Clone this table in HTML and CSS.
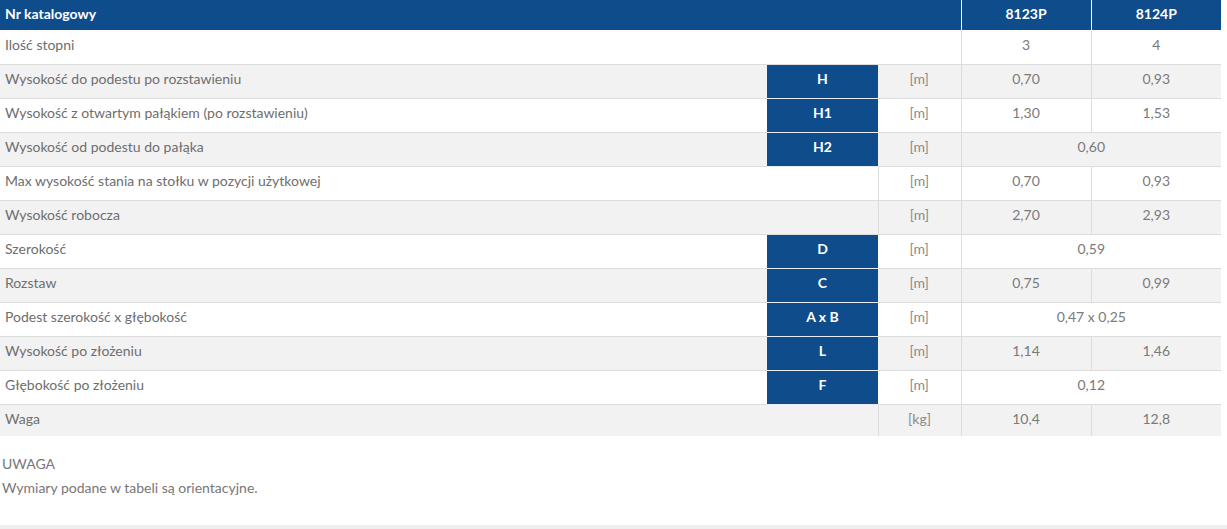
FILE: index.html
```html
<!DOCTYPE html>
<html lang="pl">
<head>
<meta charset="utf-8">
<title>Tabela</title>
<link rel="stylesheet" href="styles.css">
</head>
<body>
<div class="page">
<table class="spec">
  <colgroup>
    <col class="c-label"><col class="c-code"><col class="c-unit"><col class="c-val"><col class="c-val">
  </colgroup>
  <thead>
    <tr><th colspan="3" class="h-label">Nr katalogowy</th><th class="h-val">8123P</th><th class="h-val">8124P</th></tr>
  </thead>
  <tbody>
    <tr><td colspan="3" class="lbl">Ilość stopni</td><td class="val">3</td><td class="val">4</td></tr>
    <tr><td class="lbl">Wysokość do podestu po rozstawieniu</td><td class="code">H</td><td class="unit">[m]</td><td class="val">0,70</td><td class="val">0,93</td></tr>
    <tr><td class="lbl">Wysokość z otwartym pałąkiem (po rozstawieniu)</td><td class="code">H1</td><td class="unit">[m]</td><td class="val">1,30</td><td class="val">1,53</td></tr>
    <tr><td class="lbl">Wysokość od podestu do pałąka</td><td class="code">H2</td><td class="unit">[m]</td><td colspan="2" class="val">0,60</td></tr>
    <tr><td colspan="2" class="lbl">Max wysokość stania na stołku w pozycji użytkowej</td><td class="unit bl">[m]</td><td class="val">0,70</td><td class="val">0,93</td></tr>
    <tr><td colspan="2" class="lbl">Wysokość robocza</td><td class="unit bl">[m]</td><td class="val">2,70</td><td class="val">2,93</td></tr>
    <tr><td class="lbl">Szerokość</td><td class="code">D</td><td class="unit">[m]</td><td colspan="2" class="val">0,59</td></tr>
    <tr><td class="lbl">Rozstaw</td><td class="code">C</td><td class="unit">[m]</td><td class="val">0,75</td><td class="val">0,99</td></tr>
    <tr><td class="lbl">Podest szerokość x głębokość</td><td class="code">A x B</td><td class="unit">[m]</td><td colspan="2" class="val">0,47 x 0,25</td></tr>
    <tr><td class="lbl">Wysokość po złożeniu</td><td class="code">L</td><td class="unit">[m]</td><td class="val">1,14</td><td class="val">1,46</td></tr>
    <tr><td class="lbl">Głębokość po złożeniu</td><td class="code">F</td><td class="unit">[m]</td><td colspan="2" class="val">0,12</td></tr>
    <tr class="last"><td colspan="2" class="lbl">Waga</td><td class="unit bl">[kg]</td><td class="val">10,4</td><td class="val">12,8</td></tr>
  </tbody>
</table>
<div class="note">
  <p class="note-title">UWAGA</p>
  <p class="note-text">Wymiary podane w tabeli są orientacyjne.</p>
</div>
<div class="footer-line"></div>
</div>
</body>
</html>
```
FILE: styles.css
```css
html, body {
  margin: 0;
  padding: 0;
  background: #fff;
}
body {
  font-family: Lato, "Open Sans", "Liberation Sans", sans-serif;
  font-size: 14px;
  color: #707070;
}
.page {
  width: 1227px;
}
.spec {
  width: 1221px;
  border-collapse: collapse;
  table-layout: fixed;
}
.c-label { width: 767px; }
.c-code { width: 111px; }
.c-unit { width: 83px; }
.c-val { width: 130px; }

.spec th {
  background: #0e4c8b;
  color: #fff;
  font-weight: 700;
  height: 30px;
  padding: 0 5px 3px;
  line-height: 18px;
  box-sizing: border-box;
}
.h-label { text-align: left; }
.h-val {
  text-align: center;
  border-left: 1px solid #fff;
}
.spec td {
  height: 34px;
  padding: 0 5px 4px;
  line-height: 18px;
  box-sizing: border-box;
  border-bottom: 1px solid #dcdcdc;
  vertical-align: middle;
}
.spec tbody tr:nth-child(even) td { background: #f2f2f2; }
.spec tbody tr.last td { border-bottom: none; height: 32px; padding-bottom: 2px; }
.lbl { text-align: left; color: #6e6e6e; }
.code {
  background: #0e4c8b !important;
  color: #fff;
  font-weight: 700;
  text-align: center;
  border-bottom: 1px solid #e6edf5 !important;
}
.unit { text-align: center; color: #8a8a8a; }
.unit.bl { border-left: 1px solid #dcdcdc; }
.val {
  text-align: center;
  color: #7a7a7a;
  border-left: 1px solid #dcdcdc;
}
.note {
  padding: 16px 0 0 2px;
}
.note p { margin: 0; line-height: 24px; color: #777; }
.footer-line {
  margin-top: 25px;
  height: 4px;
  background: #eeeeee;
}
```
